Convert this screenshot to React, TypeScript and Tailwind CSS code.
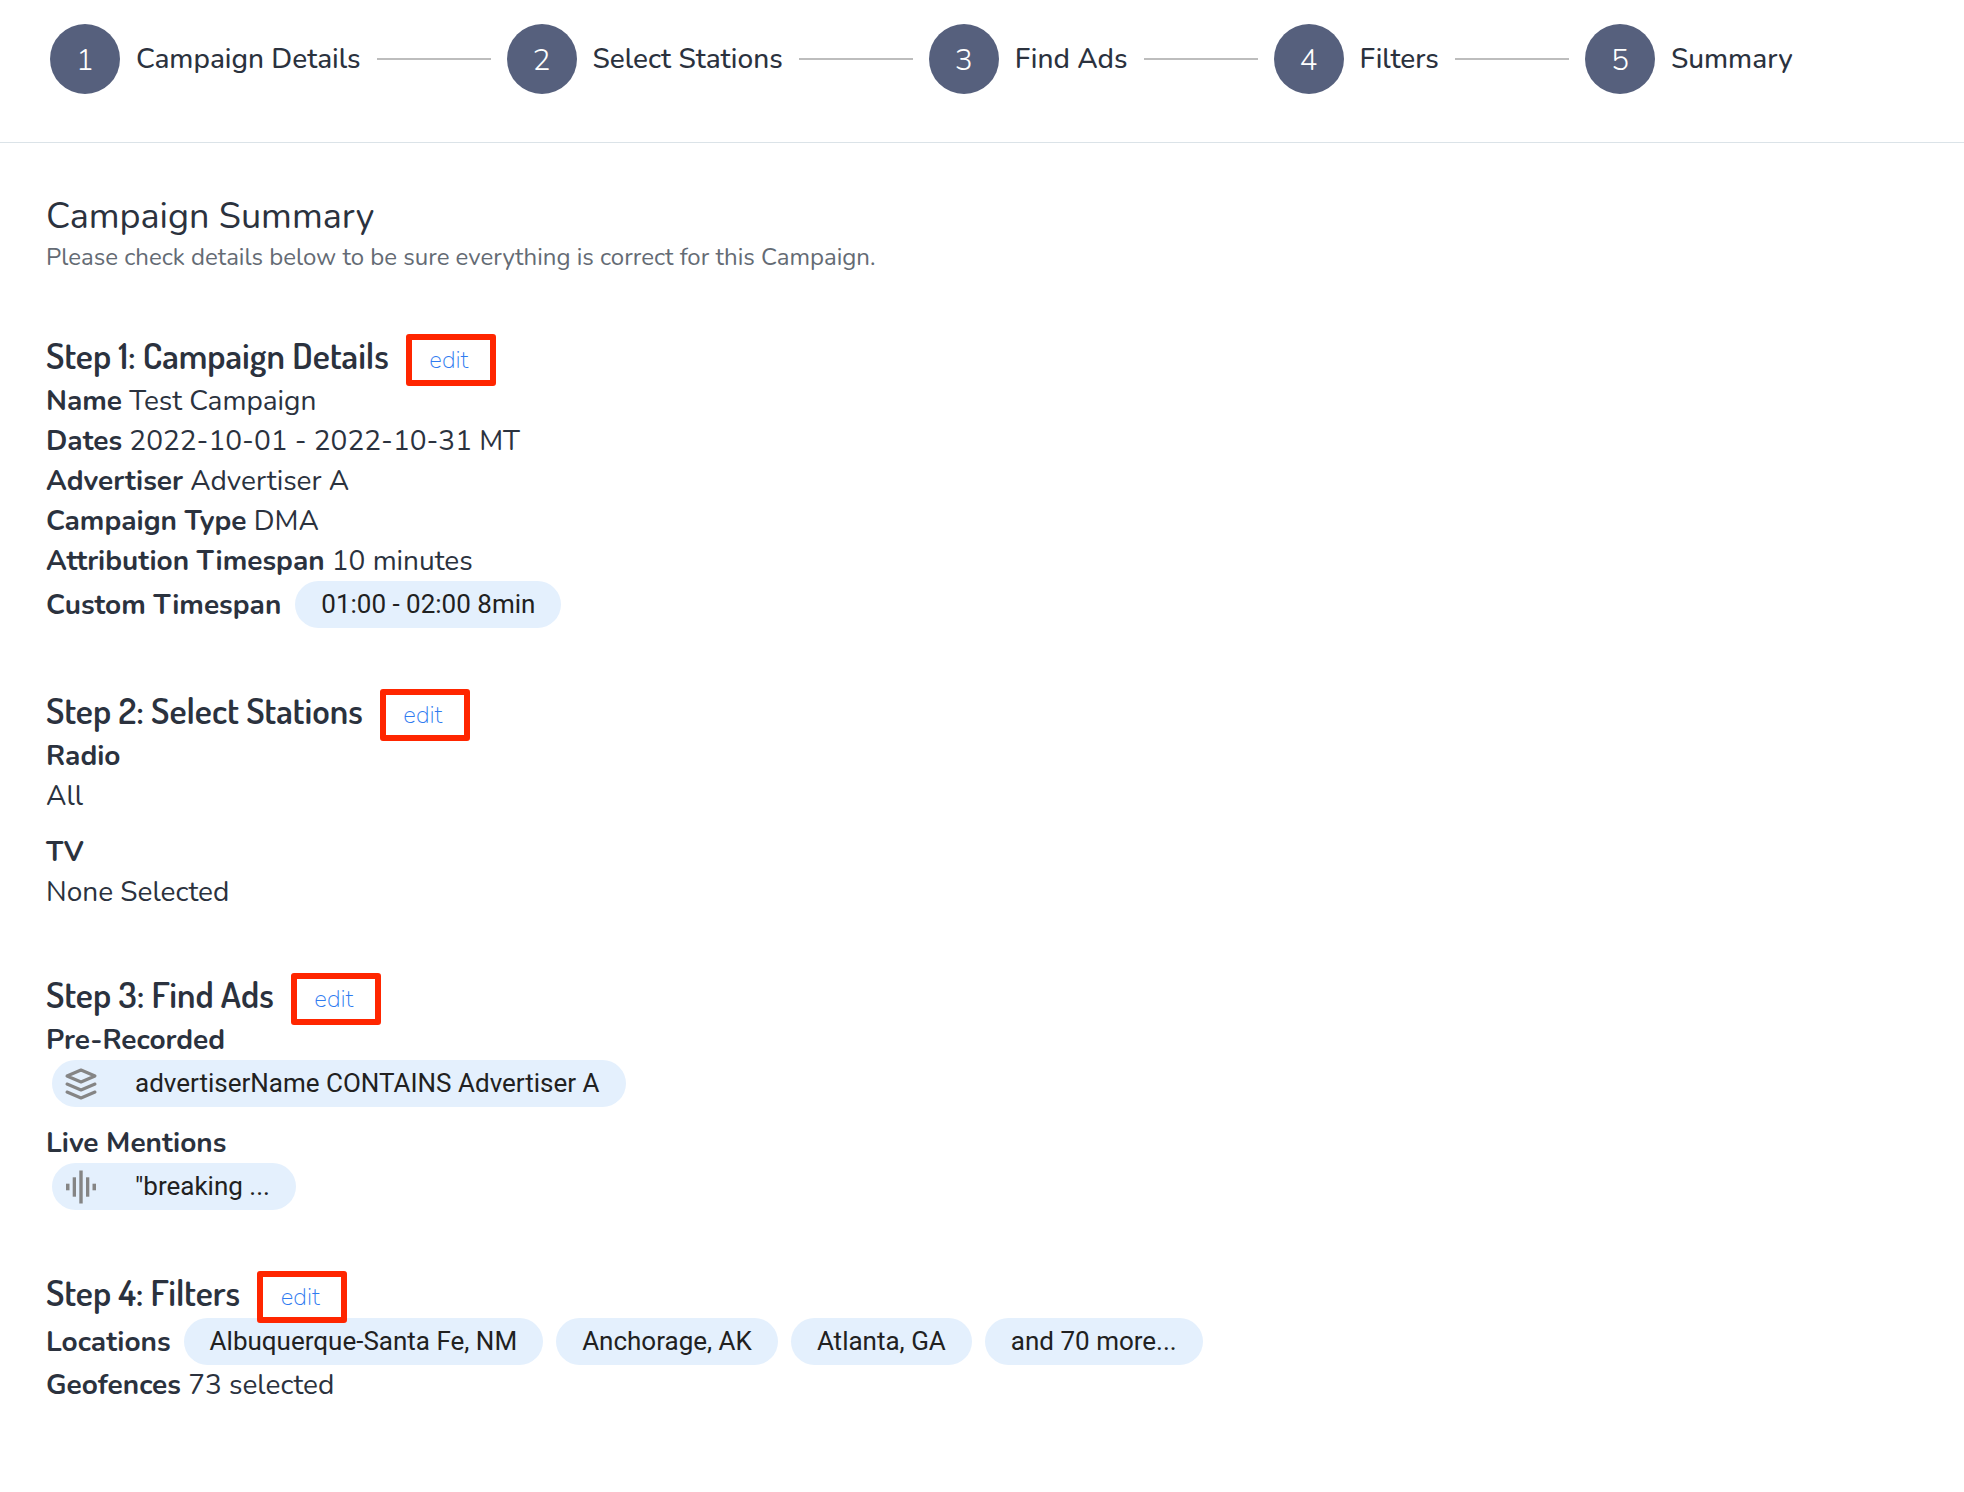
import React, { Fragment, ReactNode } from 'react';

const steps = ['Campaign Details', 'Select Stations', 'Find Ads', 'Filters', 'Summary'];

function Stepper() {
  return (
    <nav aria-label="Campaign steps" className="border-b border-[#dbe3e8] pt-6 pr-6 pb-12 pl-[50px]">
      <ol className="flex items-center gap-4">
        {steps.map((label, i) => (
          <Fragment key={label}>
            {i > 0 && <li aria-hidden="true" className="h-0.5 w-[114px] shrink-0 bg-[#bdbdbd]" />}
            <li>
              <button type="button" className="flex items-center gap-4">
                <span className="flex size-[70px] items-center justify-center rounded-full bg-[#56607d] pt-0.5 text-[30px] font-light text-white">
                  {i + 1}
                </span>
                <span className="text-[28px] font-medium whitespace-nowrap">{label}</span>
              </button>
            </li>
          </Fragment>
        ))}
      </ol>
    </nav>
  );
}

function Section({ title, children }: { title: string; children: ReactNode }) {
  return (
    <section>
      <div className="mb-[3px] flex h-[46px] items-center gap-[17px]">
        <h2 className="font-[Dosis,Nunito,Lato,sans-serif] text-4xl font-semibold whitespace-nowrap">{title}</h2>
        <button
          type="button"
          aria-label={`edit ${title}`}
          className="relative mt-2.5 flex h-[52px] w-[90px] shrink-0 items-center justify-center rounded-[3px] border-[6px] border-[#ff2600] pr-1 text-2xl leading-none font-extralight text-[#2f7bf0]"
        >
          edit
        </button>
      </div>
      {children}
    </section>
  );
}

function Row({ label, children }: { label: string; children?: ReactNode }) {
  return (
    <p className="leading-10">
      <span className="font-bold">{label}</span> {children}
    </p>
  );
}

function Chip({ icon, children }: { icon?: ReactNode; children: ReactNode }) {
  return (
    <span className="inline-flex h-[47px] items-center rounded-full bg-[#e4f0fd] px-[26px] font-[Roboto,sans-serif] text-[26px] font-normal whitespace-nowrap text-[#212121]">
      {icon && <span className="mr-9 -ml-[15px] flex size-9 items-center justify-center text-[#858585]">{icon}</span>}
      {children}
    </span>
  );
}

function LayersIcon() {
  return (
    <svg viewBox="0 0 36 36" className="size-9" fill="none" stroke="currentColor" strokeWidth="3" strokeLinejoin="round" strokeLinecap="round" aria-hidden="true">
      <path d="M18 4 32 10 18 16 4 10Z" />
      <path d="M4 18 18 24 32 18" />
      <path d="M4 26 18 32 32 26" />
    </svg>
  );
}

function WaveIcon() {
  return (
    <svg viewBox="0 0 36 36" className="size-9" fill="currentColor" aria-hidden="true">
      <rect x="3" y="14.700" width="3.500" height="6.600" />
      <rect x="9.700" y="8.300" width="3.300" height="19.400" />
      <rect x="16.300" y="1.500" width="3.400" height="33" />
      <rect x="23" y="8.300" width="3.300" height="19.400" />
      <rect x="29.500" y="14.700" width="3.500" height="6.600" />
    </svg>
  );
}

export default function App() {
  return (
    <div className="min-h-screen bg-white font-[Nunito,Lato,sans-serif] text-[#2b323e]">
      <Stepper />
      <main className="px-[46px] pt-12 pb-16 text-[28px]">
        <h1 className="text-4xl leading-[52px]">Campaign Summary</h1>
        <p className="text-2xl leading-7 text-[#646b74]">
          Please check details below to be sure everything is correct for this Campaign.
        </p>
        <div className="mt-[61px] flex flex-col gap-[59px]">
          <Section title="Step 1: Campaign Details">
            <Row label="Name">Test Campaign</Row>
            <Row label="Dates">2022-10-01 - 2022-10-31 MT</Row>
            <Row label="Advertiser">Advertiser A</Row>
            <Row label="Campaign Type">DMA</Row>
            <Row label="Attribution Timespan">10 minutes</Row>
            <div className="flex items-center gap-3.5">
              <span className="font-bold">Custom Timespan</span>
              <Chip>01:00 - 02:00 8min</Chip>
            </div>
          </Section>
          <Section title="Step 2: Select Stations">
            <Row label="Radio" />
            <p className="leading-10">All</p>
            <div className="mt-4">
              <Row label="TV" />
              <p className="leading-10">None Selected</p>
            </div>
          </Section>
          <Section title="Step 3: Find Ads">
            <Row label="Pre-Recorded" />
            <div className="flex pl-1.5">
              <Chip icon={<LayersIcon />}>advertiserName CONTAINS Advertiser A</Chip>
            </div>
            <div className="mt-4">
              <Row label="Live Mentions" />
              <div className="flex pl-1.5">
                <Chip icon={<WaveIcon />}>"breaking ...</Chip>
              </div>
            </div>
          </Section>
          <Section title="Step 4: Filters">
            <div className="flex flex-wrap items-center gap-[13px]">
              <span className="font-bold">Locations</span>
              <Chip>Albuquerque-Santa Fe, NM</Chip>
              <Chip>Anchorage, AK</Chip>
              <Chip>Atlanta, GA</Chip>
              <Chip>and 70 more...</Chip>
            </div>
            <Row label="Geofences">73 selected</Row>
          </Section>
        </div>
      </main>
    </div>
  );
}
